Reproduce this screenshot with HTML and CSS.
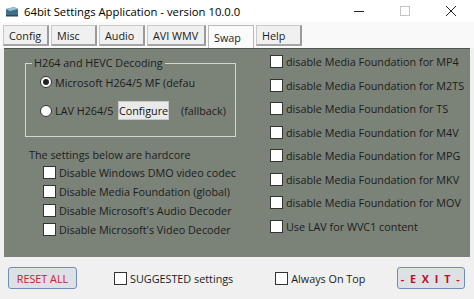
FILE: index.html
```html
<!DOCTYPE html>
<html>
<head>
<meta charset="utf-8">
<link rel="stylesheet" href="styles.css">
</head>
<body>
<div class="window">
  <div class="titlebar">
    <svg class="appicon" width="14" height="12" viewBox="0 0 14 12">
      <path d="M1 3 L9 1 L13 3 L13 10 L1 10 Z" fill="#3d6f86"/>
      <path d="M1 3 L9 1 L13 3 L5 5 Z" fill="#9cc3d6"/>
      <rect x="1" y="9" width="12" height="1.5" fill="#27495a"/>
    </svg>
    <span class="title">64bit Settings Application - version 10.0.0</span>
    <div class="controls">
      <svg class="ctl" width="46" height="22" viewBox="0 0 46 22"><rect x="18" y="11" width="10" height="1" fill="#222"/></svg>
      <svg class="ctl" width="46" height="22" viewBox="0 0 46 22"><rect x="18.5" y="6.5" width="9" height="9" fill="none" stroke="#c4c4c4"/></svg>
      <svg class="ctl" width="46" height="22" viewBox="0 0 46 22"><path d="M18 6 L28 16 M28 6 L18 16" stroke="#222" stroke-width="1"/></svg>
    </div>
  </div>
  <div class="tabs">
    <div class="tab">Config</div>
    <div class="tab">Misc</div>
    <div class="tab">Audio</div>
    <div class="tab wide">AVI WMV</div>
    <div class="tab active">Swap</div>
    <div class="tab">Help</div>
  </div>
  <div class="panel">
    <div class="leftcol">
      <fieldset class="group">
        <legend>H264 and HEVC Decoding</legend>
        <div class="radiorow">
          <span class="radio on"></span><span>Microsoft H264/5 MF (defau</span>
        </div>
        <div class="radiorow second">
          <span class="radio"></span><span class="lav">LAV H264/5</span>
          <span class="cfgbtn">Configure</span>
          <span>(fallback)</span>
        </div>
      </fieldset>
      <div class="hardtitle">The settings below are hardcore</div>
      <div class="hardlist">
        <div class="chk"><span class="box"></span>Disable Windows DMO video codec</div>
        <div class="chk"><span class="box"></span>Disable Media Foundation (global)</div>
        <div class="chk"><span class="box"></span>Disable Microsoft's Audio Decoder</div>
        <div class="chk"><span class="box"></span>Disable Microsoft's Video Decoder</div>
      </div>
    </div>
    <div class="rightcol">
      <div class="chk"><span class="box"></span>disable Media Foundation for MP4</div>
      <div class="chk"><span class="box"></span>disable Media Foundation for M2TS</div>
      <div class="chk"><span class="box"></span>disable Media Foundation for TS</div>
      <div class="chk"><span class="box"></span>disable Media Foundation for M4V</div>
      <div class="chk"><span class="box"></span>disable Media Foundation for MPG</div>
      <div class="chk"><span class="box"></span>disable Media Foundation for MKV</div>
      <div class="chk"><span class="box"></span>disable Media Foundation for MOV</div>
      <div class="chk"><span class="box"></span>Use LAV for WVC1 content</div>
    </div>
  </div>
  <div class="bottombar">
    <div class="btn reset">RESET ALL</div>
    <div class="chk bottomchk suggested"><span class="box"></span>SUGGESTED settings</div>
    <div class="chk bottomchk ontop"><span class="box"></span>Always On Top</div>
    <div class="btn exit">- E X I T -</div>
  </div>
</div>
</body>
</html>
```
FILE: styles.css
```css
* { box-sizing: border-box; }
html, body { margin: 0; padding: 0; }
body {
  width: 474px;
  height: 299px;
  overflow: hidden;
  background: #f0f0f0;
  font-family: "Open Sans", "Noto Sans", sans-serif;
  font-size: 10.8px;
  color: #1b1b1b;
}
.window {
  width: 474px;
  height: 299px;
  display: grid;
  grid-template-rows: 22px 26px 209px 42px;
}
.titlebar {
  background: #ffffff;
  display: flex;
  align-items: center;
  padding-left: 5px;
}
.appicon { margin-right: 5px; margin-top: 2px; }
.title { font-size: 11.3px; color: #000; margin-top: 1px; white-space: nowrap; }
.controls { margin-left: auto; display: flex; }
.ctl { display: block; }
.tabs {
  background: #f9f9f9;
  display: flex;
  align-items: flex-end;
  padding-left: 3px;
  gap: 2px;
}
.tab {
  width: 46px;
  height: 21px;
  margin-bottom: 2px;
  background: #f0f0f0;
  border: 1px solid #c9c9c9;
  border-right: 2px solid #9a9a9a;
  border-bottom: 2px solid #a5a5a5;
  display: flex;
  align-items: center;
  padding-left: 5px;
  white-space: nowrap;
}
.tab.wide { width: 59px; }
.tab.active {
  height: 23px;
  background: #fbfbfb;
  border: 1px solid #b9b9b9;
  border-bottom: none;
  margin-bottom: 0;
  padding-top: 1px;
}
.panel {
  margin: 0 4px;
  background: #7b8379;
  border-top: 1px solid #4f564e;
  display: flex;
  overflow: hidden;
}
.leftcol { width: 266px; flex: none; padding-left: 21px; padding-top: 7px; }
.group {
  margin: 0;
  width: 211px;
  height: 81px;
  border: 1px solid #d2d6d0;
  padding: 0 0 0 14px;
}
.group legend { padding: 0 2px; margin-left: -8px; line-height: 14px; }
.radiorow { display: flex; align-items: center; height: 16px; margin-top: 4px; white-space: nowrap; }
.radiorow.second { margin-top: 11px; height: 19px; }
.radio {
  width: 12px; height: 12px;
  border-radius: 50%;
  background: #fff;
  border: 1px solid #333;
  margin-right: 3px;
  flex: none;
  position: relative;
}
.radio.on::after {
  content: "";
  position: absolute;
  left: 2px; top: 2px;
  width: 6px; height: 6px;
  border-radius: 50%;
  background: #222;
}
.lav { width: 63px; flex: none; }
.cfgbtn {
  width: 51px; height: 19px;
  flex: none;
  background: #e9e9e9;
  border: 1px solid #c8c8c8;
  display: flex; align-items: center; justify-content: center;
  margin-right: 12px;
  color: #111;
  overflow: hidden;
}
.hardtitle { margin-top: 10px; padding-left: 4px; line-height: 16px; }
.hardlist { padding-left: 18px; }
.hardlist .chk { height: 19px; }
.chk { display: flex; align-items: center; white-space: nowrap; }
.box {
  width: 13px; height: 13px;
  background: #fff;
  border: 1px solid #333;
  margin-right: 3px;
  flex: none;
}
.rightcol { padding-top: 1px; }
.rightcol .chk { height: 23.5px; }
.bottombar {
  display: flex;
  align-items: center;
  background: #f0f0f0;
}
.btn {
  height: 22px;
  flex: none;
  border: 1px solid #6f8db5;
  border-radius: 3px;
  background: #dde0e4;
  color: #c0202c;
  display: flex; align-items: center; justify-content: center;
  white-space: pre;
}
.reset { width: 69px; margin-left: 8px; }
.suggested { margin-left: 37px; }
.ontop { margin-left: 42px; }
.exit {
  width: 68px; margin-left: auto; margin-right: 9px;
  font-weight: bold; letter-spacing: 1.5px;
  color: #b8101c;
}
```
